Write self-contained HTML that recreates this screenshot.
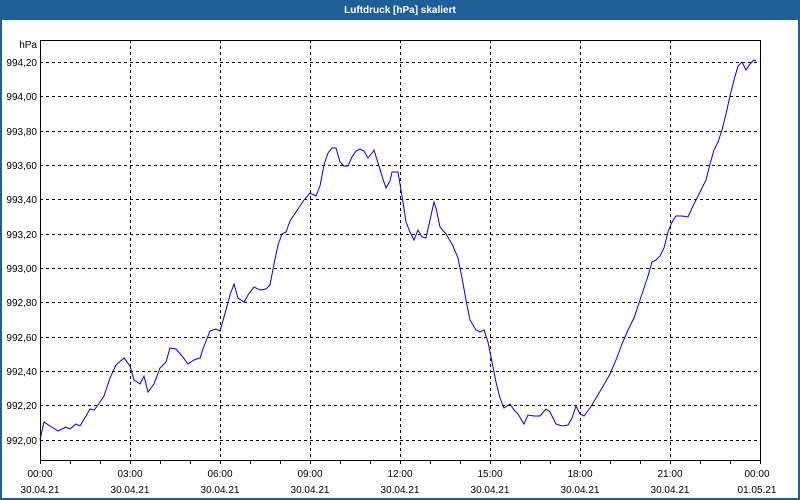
<!DOCTYPE html>
<html><head><meta charset="utf-8"><style>
html,body{margin:0;padding:0;width:800px;height:500px;overflow:hidden;background:#fff}
svg{display:block}
text{font-family:"Liberation Sans",sans-serif;font-size:10px;fill:#000}
</style></head><body>
<svg width="800" height="500" xmlns="http://www.w3.org/2000/svg">
<rect x="0" y="0" width="800" height="500" fill="#1f5f99"/>
<rect x="2" y="20" width="796" height="478" fill="#fff"/>
<text x="400" y="13" text-anchor="middle" style="fill:#fff;font-weight:bold;font-size:10px">Luftdruck [hPa] skaliert</text>
<g stroke="#000" stroke-width="1" stroke-dasharray="3,3" fill="none">
<path d="M40 62.5H760M40 96.5H760M40 131.5H760M40 165.5H760M40 199.5H760M40 234.5H760M40 268.5H760M40 302.5H760M40 337.5H760M40 371.5H760M40 405.5H760M40 440.5H760"/>
<path d="M130.5 40V460M220.5 40V460M310.5 40V460M400.5 40V460M490.5 40V460M580.5 40V460M670.5 40V460"/>
</g>
<rect x="40.5" y="40.5" width="720" height="420" fill="none" stroke="#000"/>
<g stroke="#000">
<path d="M70.5 461v3M100.5 461v3M130.5 461v3M160.5 461v3M190.5 461v3M220.5 461v3M250.5 461v3M280.5 461v3M310.5 461v3M340.5 461v3M370.5 461v3M400.5 461v3M430.5 461v3M460.5 461v3M490.5 461v3M520.5 461v3M550.5 461v3M580.5 461v3M610.5 461v3M640.5 461v3M670.5 461v3M700.5 461v3M730.5 461v3M760.5 461v3M40.5 461v3"/>
</g>
<g text-anchor="end">
<text x="37" y="48">hPa</text>
<text x="37" y="66">994,20</text><text x="37" y="100">994,00</text><text x="37" y="135">993,80</text>
<text x="37" y="169">993,60</text><text x="37" y="203">993,40</text><text x="37" y="238">993,20</text>
<text x="37" y="272">993,00</text><text x="37" y="306">992,80</text><text x="37" y="341">992,60</text>
<text x="37" y="375">992,40</text><text x="37" y="409">992,20</text><text x="37" y="444">992,00</text>
</g>
<g text-anchor="middle">
<text x="40" y="477">00:00</text><text x="40" y="493">30.04.21</text>
<text x="130" y="477">03:00</text><text x="130" y="493">30.04.21</text>
<text x="220" y="477">06:00</text><text x="220" y="493">30.04.21</text>
<text x="310" y="477">09:00</text><text x="310" y="493">30.04.21</text>
<text x="400" y="477">12:00</text><text x="400" y="493">30.04.21</text>
<text x="490" y="477">15:00</text><text x="490" y="493">30.04.21</text>
<text x="580" y="477">18:00</text><text x="580" y="493">30.04.21</text>
<text x="670" y="477">21:00</text><text x="670" y="493">30.04.21</text>
<text x="757" y="477">00:00</text><text x="757" y="493">01.05.21</text>
</g>
<polyline fill="none" stroke="#0000ee" stroke-width="1" points="40,440 44,422 50,426 58,431 66,427 70,429 76,424 80,426 86,416 90,409 94,410 98,405 104,396 110,378 116,365 124,358 130,366 134,380 140,384 144,376 148,392 154,384 160,368 166,362 170,348 176,349 182,356 188,364 194,360 200,358 204,346 210,331 216,329 220,331 226,310 230,295 234,284 238,298 244,302 248,295 254,287 260,290 266,289 270,285 274,264 278,245 282,234 286,232 290,221 296,212 300,206 304,200 310,193 316,196 320,186 324,165 328,153 332,148 336,148 340,162 344,166 348,166 352,157 356,151 360,149 364,151 368,158 372,153 374,150 378,163 382,176 386,188 390,181 392,172 398,172 402,196 406,222 410,232 414,240 418,230 422,237 426,238 430,220 434,202 436,208 440,227 446,234 452,244 458,258 462,278 466,300 470,320 476,330 480,332 484,330 488,342 492,362 496,382 500,398 504,408 510,404 514,410 518,414 524,424 528,415 534,416 540,416 546,409 550,412 556,424 562,426 568,425 572,418 576,406 580,414 584,416 590,408 596,398 602,388 610,374 616,360 622,344 628,330 634,318 640,300 644,288 648,276 652,262 656,260 660,256 664,248 668,232 672,222 676,216 682,216 688,217 692,208 698,196 702,188 706,180 710,164 714,150 718,142 722,130 726,114 730,96 734,80 738,66 742,62 746,70 750,64 754,60 756,61"/>
</svg>
</body></html>
